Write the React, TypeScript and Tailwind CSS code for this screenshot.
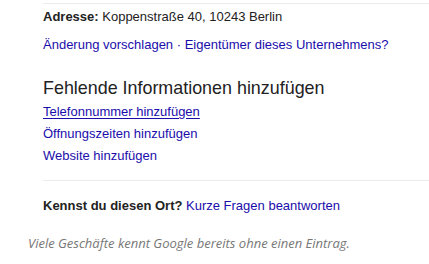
export default function App() {
  return (
    <div className="h-[264px] w-[429px] overflow-hidden bg-white pt-[3px]">
      <div className="ml-[43px] border-t border-[#ebebeb] pt-[4px] font-['Liberation_Sans',Arial,sans-serif] text-[13px] leading-[18px] text-[#222]">
        <p>
          <span className="font-bold">Adresse:</span> Koppenstraße 40, 10243 Berlin
        </p>
        <p className="mt-[10px] text-[#1a0dab]">
          Änderung vorschlagen · Eigentümer dieses Unternehmens?
        </p>
        <h2 className="mt-[23px] text-[17.9px] leading-[22px] text-[#222]">
          Fehlende Informationen hinzufügen
        </h2>
        <div className="mt-[2px] flex flex-col text-[#1a0dab]">
          <a className="leading-[22px] underline underline-offset-2">Telefonnummer hinzufügen</a>
          <a className="leading-[22px]">Öffnungszeiten hinzufügen</a>
          <a className="leading-[22px]">Website hinzufügen</a>
        </div>
        <div className="mt-[13px] border-t border-[#ebebeb] pt-[16px] pb-[18px]">
          <p>
            <span className="font-bold">Kennst du diesen Ort?</span>{" "}
            <span className="text-[#1a0dab]">Kurze Fragen beantworten</span>
          </p>
        </div>
      </div>
      <p className="ml-[28px] font-['Open_Sans',sans-serif] text-[13px] italic leading-[20px] text-[#777]">
        Viele Geschäfte kennt Google bereits ohne einen Eintrag.
      </p>
    </div>
  );
}
